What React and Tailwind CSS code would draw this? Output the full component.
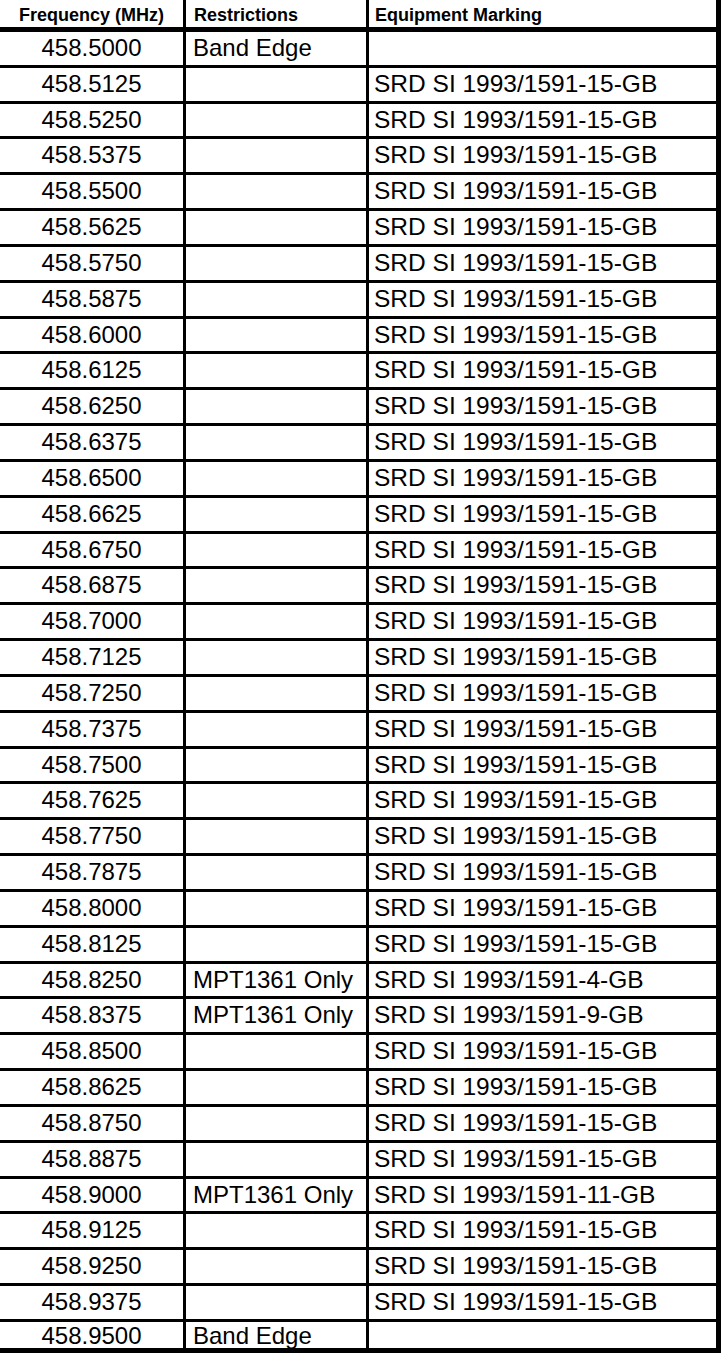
const freqs = [];
for (let i = 0; i <= 36; i++) {
  freqs.push((458.5 + i * 0.0125).toFixed(4));
}

const special = {
  '458.8250': ['MPT1361 Only', 'SRD SI 1993/1591-4-GB'],
  '458.8375': ['MPT1361 Only', 'SRD SI 1993/1591-9-GB'],
  '458.9000': ['MPT1361 Only', 'SRD SI 1993/1591-11-GB'],
};

const rows = freqs.map((f, i) => {
  if (i === 0 || i === freqs.length - 1) return { f, r: 'Band Edge', m: '' };
  if (special[f]) return { f, r: special[f][0], m: special[f][1] };
  return { f, r: '', m: 'SRD SI 1993/1591-15-GB' };
});

export default function App() {
  return (
    <div className="w-[721px] bg-white text-black" style={{ fontFamily: '"Liberation Sans", Arial, sans-serif' }}>
      {/* header */}
      <div className="flex h-[32px] border-b-[5px] border-black text-[18px] leading-[18px] font-bold">
        <div className="w-[186px] border-r-[3px] border-black pt-[6px] text-center">Frequency (MHz)</div>
        <div className="w-[183px] border-r-[3px] border-black pt-[6px] pl-[8px]">Restrictions</div>
        <div className="w-[352px] border-r-[5px] border-black pt-[6px] pl-[6px]">Equipment Marking</div>
      </div>

      {rows.map((row, i) => {
        const last = i === rows.length - 1;
        return (
          <div
            key={row.f}
            className={
              last
                ? 'flex h-[30.8px] border-b-[5px] border-black text-[24px] leading-[24px]'
                : 'flex h-[35.84px] border-b-[3px] border-black text-[24px] leading-[24px]'
            }
          >
            <div className={last ? 'w-[186px] border-r-[3px] border-black pt-[2px] text-center' : 'w-[186px] border-r-[3px] border-black pt-[4px] text-center'}>{row.f}</div>
            <div className={last ? 'w-[183px] border-r-[3px] border-black pt-[2px] pl-[7px]' : 'w-[183px] border-r-[3px] border-black pt-[4px] pl-[7px]'}>{row.r}</div>
            <div className={last ? 'w-[352px] border-r-[5px] border-black pt-[2px] pl-[5px] text-[24.5px]' : 'w-[352px] border-r-[5px] border-black pt-[4px] pl-[5px] text-[24.5px]'}>{row.m}</div>
          </div>
        );
      })}
    </div>
  );
}
